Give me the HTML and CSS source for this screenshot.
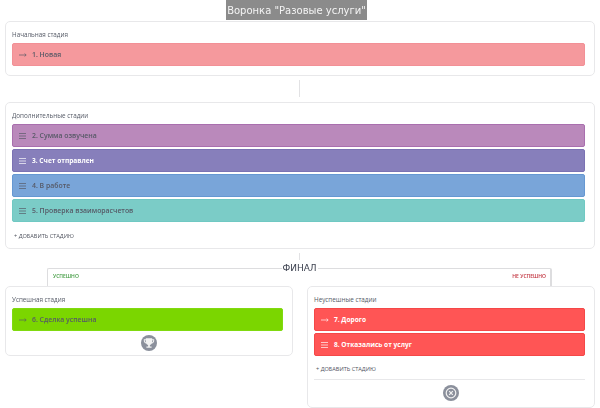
FILE: index.html
```html
<!DOCTYPE html>
<html lang="ru">
<head>
<meta charset="utf-8">
<title>Воронка</title>
<link rel="stylesheet" href="styles.css">
</head>
<body>
<div class="page">
  <div class="title-row"><h1 class="title">Воронка "Разовые услуги"</h1></div>

  <section class="card card-initial">
    <div class="card-label">Начальная стадия</div>
    <div class="stage stage-pink">
      <svg class="ico" viewBox="0 0 8 6"><path d="M0 3h7M5.600 1.600 7.200 3 5.600 4.400"/></svg>
      <span class="stage-name">1. Новая</span>
    </div>
  </section>

  <div class="connector connector-a"></div>

  <section class="card card-extra">
    <div class="card-label">Дополнительные стадии</div>
    <div class="stages">
      <div class="stage stage-plum">
        <svg class="ico" viewBox="0 0 8 6"><path d="M0 .5h7M0 3h7M0 5.500h7"/></svg>
        <span class="stage-name">2. Сумма озвучена</span>
      </div>
      <div class="stage stage-violet stage-light">
        <svg class="ico" viewBox="0 0 8 6"><path d="M0 .5h7M0 3h7M0 5.500h7"/></svg>
        <span class="stage-name">3. Счет отправлен</span>
      </div>
      <div class="stage stage-blue">
        <svg class="ico" viewBox="0 0 8 6"><path d="M0 .5h7M0 3h7M0 5.500h7"/></svg>
        <span class="stage-name">4. В работе</span>
      </div>
      <div class="stage stage-teal">
        <svg class="ico" viewBox="0 0 8 6"><path d="M0 .5h7M0 3h7M0 5.500h7"/></svg>
        <span class="stage-name">5. Проверка взаиморасчетов</span>
      </div>
    </div>
    <div class="add">+ ДОБАВИТЬ СТАДИЮ</div>
  </section>

  <div class="connector connector-b"></div>

  <div class="final">
    <div class="final-side final-left"><span class="final-ok">УСПЕШНО</span></div>
    <div class="final-title">ФИНАЛ</div>
    <div class="final-side final-right"><span class="final-bad">НЕ УСПЕШНО</span></div>
  </div>

  <div class="columns">
    <section class="card card-win">
      <div class="card-label">Успешная стадия</div>
      <div class="stage stage-green">
        <svg class="ico" viewBox="0 0 8 6"><path d="M0 3h7M5.600 1.600 7.200 3 5.600 4.400"/></svg>
        <span class="stage-name">6. Сделка успешна</span>
      </div>
      <div class="badge-row">
        <span class="badge">
          <svg viewBox="0 0 16 16"><path class="fill" d="M4.800 3.200h6.400v1h2v1.600c0 1.500-1 2.500-2.400 2.700-.4.800-1.100 1.300-1.900 1.500v1.500h1.700v1.300H5.400V11.500h1.700V10c-.8-.2-1.500-.7-1.900-1.500C3.800 8.300 2.800 7.300 2.800 5.800V4.200h2zM3.800 5.200v.6c0 .8.400 1.300 1 1.600V5.200zm8.400 0h-1v2.200c.6-.3 1-.8 1-1.600z"/></svg>
        </span>
      </div>
    </section>

    <section class="card card-lose">
      <div class="card-label">Неуспешные стадии</div>
      <div class="stages">
        <div class="stage stage-red stage-light">
          <svg class="ico" viewBox="0 0 8 6"><path d="M0 3h7M5.600 1.600 7.200 3 5.600 4.400"/></svg>
          <span class="stage-name">7. Дорого</span>
        </div>
        <div class="stage stage-red stage-light">
          <svg class="ico" viewBox="0 0 8 6"><path d="M0 .5h7M0 3h7M0 5.500h7"/></svg>
          <span class="stage-name">8. Отказались от услуг</span>
        </div>
      </div>
      <div class="add add-lose">+ ДОБАВИТЬ СТАДИЮ</div>
      <div class="badge-row badge-row-rule">
        <span class="badge">
          <svg viewBox="0 0 16 16"><circle class="line" cx="8" cy="8" r="4.800"/><path class="line" d="M6.200 6.200l3.600 3.600M9.800 6.200l-3.600 3.600"/></svg>
        </span>
      </div>
    </section>
  </div>
</div>
</body>
</html>
```
FILE: styles.css
```css
* { box-sizing: border-box; }
html, body { margin: 0; padding: 0; background: #fff; }
body { width: 600px; height: 408px; overflow: hidden; font-family: "Open Sans", "Noto Sans", sans-serif; color: #4a4f5c; }
.page { padding: 0 5px; display: flex; flex-direction: column; filter: blur(.25px); }

.title-row { display: flex; justify-content: center; height: 21px; margin-left: -7px; }
.title { margin: 0; height: 20px; padding: 0 1.500px; background: #8b8b8b; color: #f4f4f4; font: 400 10px/21px "DejaVu Sans", sans-serif; white-space: nowrap; }

.card { background: #fff; border: 1px solid #e8e8ea; border-radius: 5px; padding: 0 9px 0 6px; }
.card-initial { height: 55px; }
.card-extra { height: 147px; }
.card-label { font-size: 6.300px; line-height: 10px; padding-top: 8px; height: 21px; color: #555a66; }

.stages { display: flex; flex-direction: column; gap: 2px; }
.stage { height: 23px; border-radius: 2px; border-style: solid; border-width: 1px; display: flex; align-items: center; padding-left: 6px; gap: 5px; font-size: 6.900px; font-weight: 600; color: #565966; }
.ico { width: 8px; height: 6px; flex: none; fill: none; stroke: currentColor; stroke-width: .8; opacity: .85; }
.stage-name { white-space: nowrap; }
.stage-light { color: #fff; font-weight: 700; font-size: 6.600px; }

.stage-pink { background: #f5999d; border-color: #f29096; }
.stage-plum { background: #ba89bb; border-color: #a96fae; }
.stage-violet { background: #877fbb; border-color: #7b72b3; }
.stage-blue { background: #79a5d9; border-color: #6698d2; }
.stage-teal { background: #7bccc7; border-color: #70c9c3; }
.stage-green { background: #7bd600; border-color: #80da10; }
.stage-red { background: #ff5555; border-color: #f44848; }

.add { font-size: 5.600px; line-height: 8px; margin-top: 10px; padding-left: 2px; color: #4f535e; white-space: nowrap; }
.add-lose { margin-top: 9px; }

.connector { width: 1px; margin-left: 294px; background: #e2e2e4; }
.connector-a { height: 17px; margin-top: 4px; margin-bottom: 5px; }
.connector-b { height: 7px; margin-top: 4px; }

.final { display: flex; height: 19px; margin-top: 1px; padding: 0 43px 0 42px; }
.final-side { flex: 1; height: 18px; margin-top: 7px; border-top: 1px solid #dddddf; font-size: 5px; font-weight: 600; line-height: 8px; padding-top: 3px; }
.final-left { border-left: 1px solid #dddddf; border-top-left-radius: 2px; padding-left: 5px; }
.final-right { border-right: 2px solid #dddddf; border-top-right-radius: 2px; padding-right: 4px; text-align: right; }
.final-ok { color: #3f9a3f; }
.final-bad { color: #c0303c; }
.final-title { width: 36px; text-align: center; font: 400 9px/15px "DejaVu Sans", sans-serif; color: #3d4250; }

.columns { display: flex; gap: 14px; align-items: flex-start; margin-top: 6px; }
.card-win { width: 288px; height: 70px; padding-right: 9px; }
.card-lose { width: 288px; height: 122px; }

.badge-row { display: flex; justify-content: center; padding-top: 4px; padding-left: 3px; }
.badge-row-rule { margin-top: 6px; border-top: 1px solid #e8e8ea; padding-top: 5px; }
.badge { width: 16px; height: 16px; border-radius: 50%; background: #8b909c; display: block; }
.badge svg { width: 16px; height: 16px; display: block; }
.fill { fill: #f2f2f2; }
.line { fill: none; stroke: #f2f2f2; stroke-width: 1.200; }
```
